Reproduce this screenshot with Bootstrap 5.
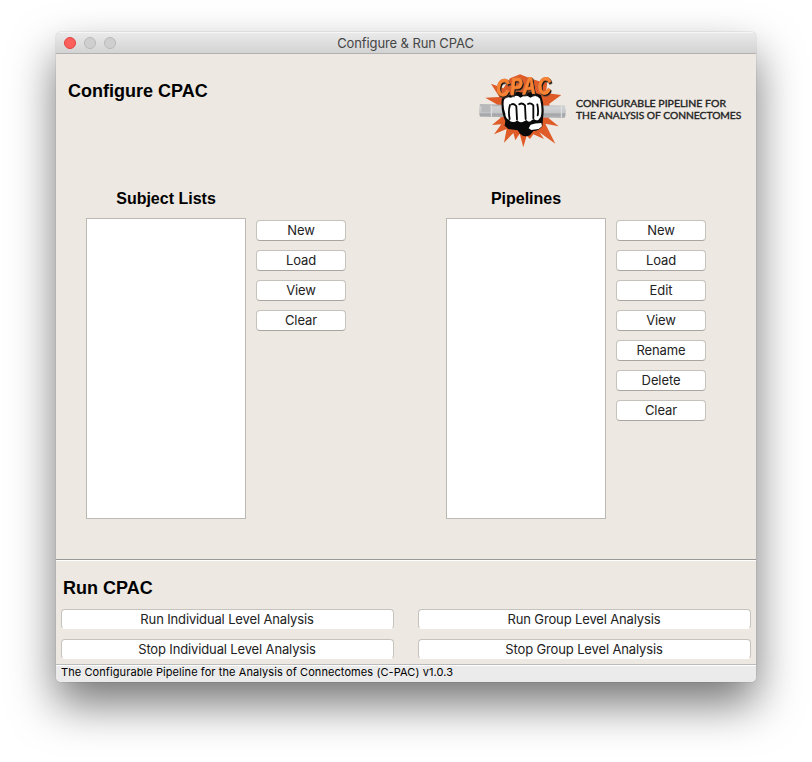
<!DOCTYPE html>
<html lang="en">
<head>
<meta charset="utf-8">
<meta name="viewport" content="width=device-width, initial-scale=1">
<title>Configure &amp; Run CPAC</title>
<link href="https://cdn.jsdelivr.net/npm/bootstrap@5.3.0/dist/css/bootstrap.min.css" rel="stylesheet">
<style>
body{font-family:Inter,"Liberation Sans",sans-serif;font-size:13px;line-height:16px;color:#000;background:#fff;padding:32px 56px 80px;height:762px;overflow:hidden}
.app-window{width:700px;height:650px;border-radius:5px;background:#ede8e2;overflow:hidden}
.window-shadow{border-radius:5px;width:700px;height:650px;box-shadow:0 0 1px rgba(0,0,0,.5),0 22px 45px rgba(0,0,0,.54)}
.title-bar{height:22px;background:linear-gradient(#ebebeb,#d3d3d3);border-bottom:1px solid #b1b1b1;box-shadow:inset 0 1px #f6f6f6;padding-left:8px}
.light{width:12px;height:12px;border-radius:50%;background:#cfcfcf;border:1px solid #b9b9b9}
.light-close{background:#fc605c;border-color:#e0443f}
.title-text{color:#454545;letter-spacing:-.11px;padding-right:61px}
.helv{font-family:"Liberation Sans",Arial,sans-serif;font-weight:700;margin:0}
.h-main{font-size:18px;line-height:22px}
.h-list{font-size:16px;line-height:20px;width:160px}
.config-pane{height:505px}
.config-head{height:126px;padding:11px 0 0 12px}
.config-head .h-main{padding-top:15px}
.lists{padding:9px 50px 0 30px}
.list-row{gap:10px;padding-top:9px}
.list-area{width:160px;height:301px;background:#fff;border:1px solid #bcb8b3}
.mac-btn{--bs-btn-font-size:13px;--bs-btn-line-height:18px;--bs-btn-padding-y:0;--bs-btn-padding-x:0;--bs-btn-color:#222;--bs-btn-hover-color:#222;--bs-btn-bg:#fff;--bs-btn-hover-bg:#f5f5f5;--bs-btn-border-radius:4px;--bs-btn-border-color:#c6c2bd;font-family:inherit;height:21px;border-bottom-color:#a9a6a2;letter-spacing:-.14px}
.btn-col .mac-btn{padding-bottom:1px;line-height:17px;letter-spacing:-.1px}
.btn-col{width:90px;gap:9px;padding-top:2px}
.run-pane{height:105px;border-top:1px solid #999;box-shadow:inset 0 1px #fff;padding:17px 5px 0}
.run-pane .h-main{padding-left:2px}
.run-grid{display:grid;grid-template-columns:333px 333px;column-gap:24px;row-gap:10px;padding-top:10px}
.run-grid .mac-btn{height:20px;border-bottom-color:#fff;padding-right:1px}
.status-line{height:18px;background:#ebebeb;border-top:1px solid #bbb;box-shadow:inset 0 1px #fff;font-size:11px;line-height:15px;padding-left:5px;letter-spacing:.085px}
.logo-word{filter:drop-shadow(3px 4px 0 #17100c) drop-shadow(0 0 1px #8a8580)}
</style>
<script src="https://cdn.jsdelivr.net/npm/bootstrap@5.3.0/dist/js/bootstrap.bundle.min.js"></script>
</head>
<body>
<div class="window-shadow">
<main class="app-window d-flex flex-column">
  <header class="title-bar d-flex align-items-center flex-shrink-0">
    <div class="d-flex gap-2"><span class="light light-close"></span><span class="light"></span><span class="light"></span></div>
    <div class="title-text flex-grow-1 text-center">Configure &amp; Run CPAC</div>
  </header>
  <section class="config-pane flex-shrink-0">
    <div class="config-head d-flex justify-content-between align-items-start">
      <h1 class="helv h-main">Configure CPAC</h1>
      <svg width="286" height="90" viewBox="0 0 858 270" role="img" aria-label="CPAC logo">
        <defs><linearGradient id="pipe" x1="0" y1="0" x2="0" y2="1"><stop offset="0" stop-color="#a2a4a6"/><stop offset=".2" stop-color="#d2d3d5"/><stop offset=".6" stop-color="#c4c6c8"/><stop offset=".72" stop-color="#a2a4a7"/><stop offset="1" stop-color="#b4b6b8"/></linearGradient></defs>
        <path fill="#df5c28" d="M63 56L100 70 120 40 150 28 176 38 205 48 232 50 228 84 274 90 238 116 240 150 236 160 266 184 226 176 256 236 208 202 222 222 190 208 180 222 170 212 160 247 149 206 136 226 130 204 102 233 110 192 72 208 94 178 66 180 92 158 80 118 46 98 88 96Z"/>
        <path fill="url(#pipe)" d="M30 118L284 122Q291 140 284 159L30 155Q24 137 30 118z"/>
        <path d="M34 120H62V142H34z" fill="#b7b9bb"/><path d="M64 120v35M274 123v35" stroke="#e3e4e5" stroke-width="3"/>
        <path fill="#090909" d="M95 105Q96 94 110 94L142 80 164 84 186 80 213 90Q224 119 220 151L217 184Q207 198 190 198L180 211Q163 219 150 206L143 196 115 192 104 182 106 168Q92 140 95 105z"/>
        <path fill="#fff" d="M102 104Q109 94 123 98 141 86 151 98 168 87 181 98 199 87 210 101Q218 135 212 156L205 165Q198 168 192 162L186 165Q178 175 169 165L164 168Q150 177 142 166L136 170Q122 174 117 164 106 160 106 146 98 124 102 104z"/>
        <path fill="none" stroke="#090909" stroke-width="5.5" stroke-linecap="round" d="M119 162Q114 138 120 120M141 163L139 124Q132 114 125 118M167 162L165 121Q156 112 148 118M190 160L190 121Q182 112 174 117M202 118Q206 138 203 151"/>
        <path fill="#fff" d="M182 179Q194 175 214 174L216 184 206 192 184 195 176 190z"/>
        <g class="logo-word"><text transform="translate(80 92) rotate(-3) scale(.76 1)" x="0 56 104 164" y="2 0 0 3" font-family="Liberation Sans,Arial,sans-serif" font-size="72" font-weight="700" font-style="italic" fill="#fb8434" stroke="#fb8434" stroke-width="2">CPAC</text></g>
        <g font-family="Lato,Inter,sans-serif" font-size="30" font-weight="400" fill="#1f1f1f" stroke="#1f1f1f" stroke-width="1.1"><text x="318" y="126" textLength="450" lengthAdjust="spacingAndGlyphs">CONFIGURABLE PIPELINE FOR</text><text x="318" y="163" textLength="496" lengthAdjust="spacingAndGlyphs">THE ANALYSIS OF CONNECTOMES</text></g>
      </svg>
    </div>
    <div class="lists d-flex justify-content-between">
      <div>
        <h2 class="helv h-list text-center">Subject Lists</h2>
        <div class="list-row d-flex">
          <div class="list-area"></div>
          <div class="btn-col d-flex flex-column"><button class="btn mac-btn">New</button><button class="btn mac-btn">Load</button><button class="btn mac-btn">View</button><button class="btn mac-btn">Clear</button></div>
        </div>
      </div>
      <div>
        <h2 class="helv h-list text-center">Pipelines</h2>
        <div class="list-row d-flex">
          <div class="list-area"></div>
          <div class="btn-col d-flex flex-column"><button class="btn mac-btn">New</button><button class="btn mac-btn">Load</button><button class="btn mac-btn">Edit</button><button class="btn mac-btn">View</button><button class="btn mac-btn">Rename</button><button class="btn mac-btn">Delete</button><button class="btn mac-btn">Clear</button></div>
        </div>
      </div>
    </div>
  </section>
  <section class="run-pane flex-shrink-0">
    <h1 class="helv h-main">Run CPAC</h1>
    <div class="run-grid"><button class="btn mac-btn">Run Individual Level Analysis</button><button class="btn mac-btn">Run Group Level Analysis</button><button class="btn mac-btn">Stop Individual Level Analysis</button><button class="btn mac-btn">Stop Group Level Analysis</button></div>
  </section>
  <footer class="status-line flex-shrink-0">The Configurable Pipeline for the Analysis of Connectomes (C-PAC) v1.0.3</footer>
</main>
</div>
</body>
</html>
